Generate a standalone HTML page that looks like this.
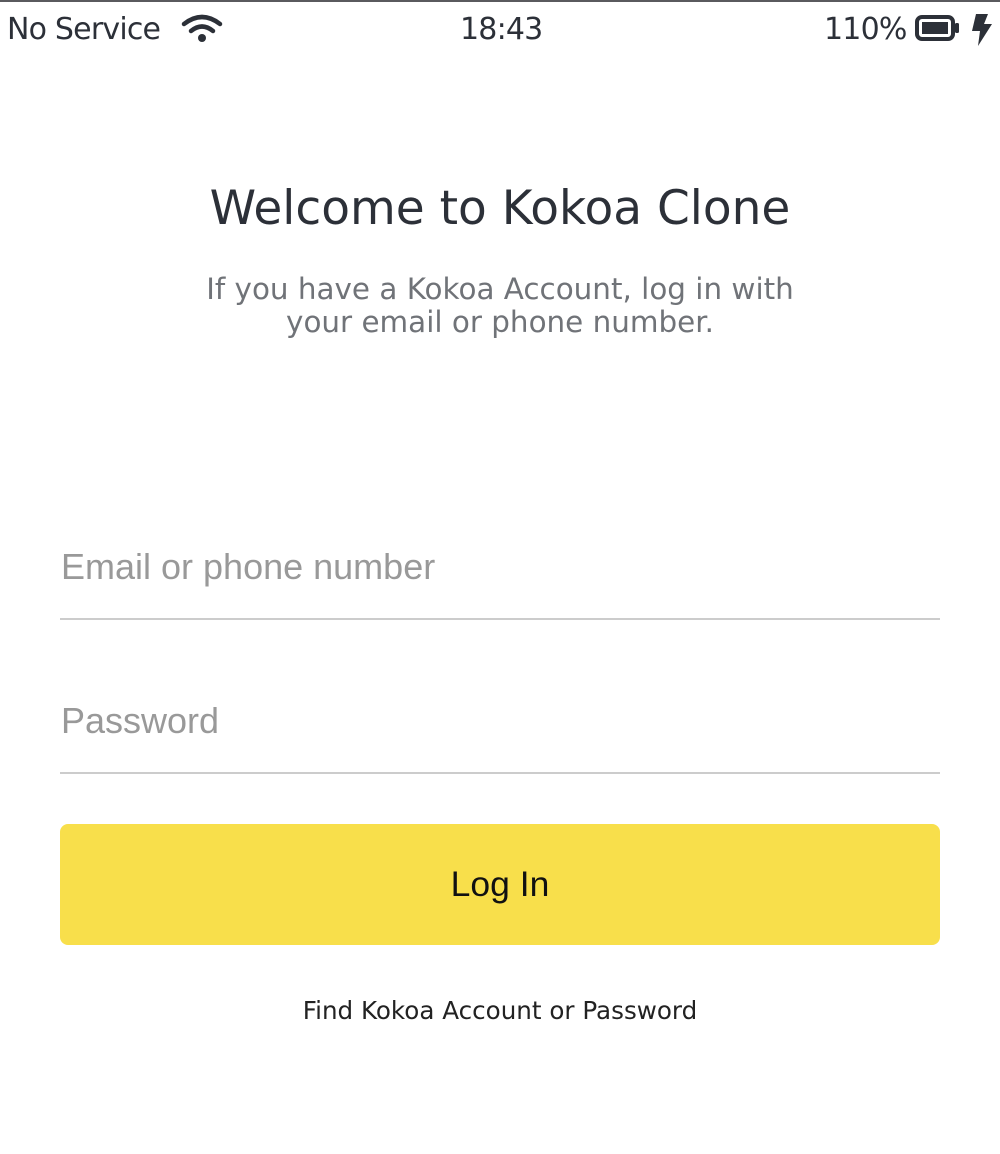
<!DOCTYPE html>
<html><head><style>
body{margin:0;width:1000px;height:1154px;background:#fff;font-family:"DejaVu Sans","Liberation Sans",sans-serif;position:relative;overflow:hidden;color:#2c3038}
.top{position:absolute;left:0;top:0;width:1000px;height:2px;background:#5a5a5e}
.sb{position:absolute;top:12px;font-size:30px;letter-spacing:-0.8px;color:#2c3038}
h1{position:absolute;top:181px;left:0;width:1000px;text-align:center;margin:0;font-weight:normal;font-size:47px;letter-spacing:0px}
.sub{position:absolute;top:273px;left:0;width:1000px;text-align:center;font-size:29.4px;line-height:33px;color:#707378}
.inp{position:absolute;left:60px;width:880px;border-bottom:2px solid #ccc;font-family:"Liberation Sans",Arial,sans-serif;font-size:36px;color:#999;height:75px;line-height:44px;box-sizing:border-box}
.btn{position:absolute;left:60px;top:824px;width:880px;height:121px;background:#f8df4b;border-radius:8px;text-align:center;line-height:121px;font-family:"Liberation Sans",Arial,sans-serif;font-size:35.5px;color:#111}
.link{position:absolute;top:996px;left:0;width:1000px;text-align:center;font-size:24.6px;color:#222}
</style></head><body>
<div class="top"></div>
<div class="sb" style="left:7px">No Service</div>
<svg style="position:absolute;left:180px;top:12px" width="44" height="32" viewBox="0 0 44 32"><path d="M4 12 Q22 -2 40 12" stroke="#2c3038" stroke-width="4.5" fill="none" stroke-linecap="round"/><path d="M11 19 Q22 10 33 19" stroke="#2c3038" stroke-width="4.5" fill="none" stroke-linecap="round"/><circle cx="22" cy="26" r="4" fill="#2c3038"/></svg>
<div class="sb" style="left:460px">18:43</div>
<div class="sb" style="left:824px">110%</div>
<svg style="position:absolute;left:914px;top:14px" width="82" height="32" viewBox="0 0 82 32"><rect x="3" y="3" width="36" height="22" rx="5" fill="none" stroke="#2c3038" stroke-width="4"/><rect x="8" y="8" width="26" height="12" fill="#2c3038"/><rect x="41" y="9" width="4" height="10" rx="1.5" fill="#2c3038"/><path d="M62 0 L74 0 L70 10 L78 10 L64 32 L66 17 L58 17 Z" fill="#2c3038"/></svg>
<h1>Welcome to Kokoa Clone</h1>
<div class="sub">If you have a Kokoa Account, log in with<br>your email or phone number.</div>
<div class="inp" style="top:545px;padding-left:1px">Email or phone number</div>
<div class="inp" style="top:699px;padding-left:1px">Password</div>
<div class="btn">Log In</div>
<div class="link">Find Kokoa Account or Password</div>
</body></html>
